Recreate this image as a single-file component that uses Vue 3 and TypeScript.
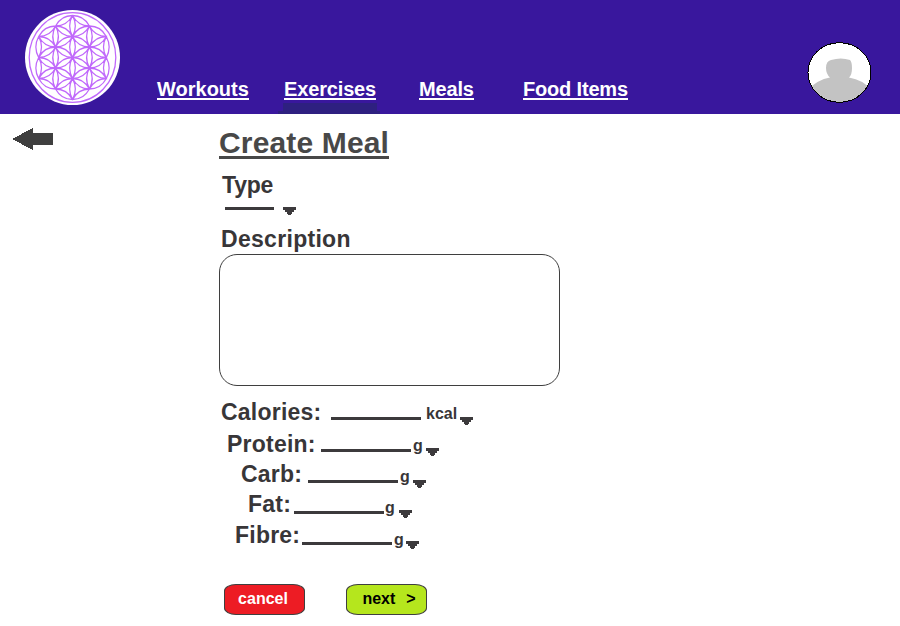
<script setup lang="ts">
interface NavItem {
  label: string
  slug: string
  active?: boolean
}
interface Nutrient {
  label: string
  slug: string
  unit: string
}

const navItems: NavItem[] = [
  { label: 'Workouts', slug: 'workouts' },
  { label: 'Exercises', slug: 'exercises', active: true },
  { label: 'Meals', slug: 'meals' },
  { label: 'Food Items', slug: 'foods' },
]

const nutrients: Nutrient[] = [
  { label: 'Calories:', slug: 'calories', unit: 'kcal' },
  { label: 'Protein:', slug: 'protein', unit: 'g' },
  { label: 'Carb:', slug: 'carb', unit: 'g' },
  { label: 'Fat:', slug: 'fat', unit: 'g' },
  { label: 'Fibre:', slug: 'fibre', unit: 'g' },
]

// Flower emblem: a lens-shaped petal joins each pair of neighbours on a 19-point hex lattice.
const R = 21
const points: [number, number][] = []
for (let q = -2; q <= 2; q++) {
  for (let s = -2; s <= 2; s++) {
    if (Math.abs(q + s) <= 2) points.push([q * R * Math.sqrt(0.75), (s + q / 2) * R])
  }
}
const petals: string[] = []
points.forEach(([x1, y1], i) => {
  points.slice(i + 1).forEach(([x2, y2]) => {
    if (Math.abs(Math.hypot(x2 - x1, y2 - y1) - R) < 0.1) {
      const a = `${x1.toFixed(2)} ${y1.toFixed(2)}`
      const b = `${x2.toFixed(2)} ${y2.toFixed(2)}`
      petals.push(`M${a}A${R} ${R} 0 0 1 ${b}A${R} ${R} 0 0 1 ${a}`)
    }
  })
})
const flower = petals.join('')
const caret = 'M0 0H13V3H11V5H9V7H8V8H5V7H4V5H2V3H0Z'
</script>

<template>
  <div class="page">
    <header class="topbar">
      <svg class="logo" viewBox="-48.5 -48.5 96 96">
        <circle r="47.5" fill="#fff" />
        <g fill="none" stroke="#c069fb">
          <ellipse rx="43.3" ry="44.8" stroke-width="1.3" />
          <path :d="flower" transform="scale(.93 1)" stroke-width="1.35" />
        </g>
      </svg>
      <nav class="nav">
        <div v-for="item in navItems" :key="item.slug" class="nav-item" :class="item.slug">
          <a class="nav-link">{{ item.label }}</a>
          <svg v-if="item.active" class="marker" viewBox="0 0 102 11" shape-rendering="crispEdges">
            <path d="M5 0H99V8H102V11H0V8H5Z" fill="#2e2080" />
          </svg>
        </div>
      </nav>
      <svg class="avatar" viewBox="0 0 66 62">
        <defs>
          <clipPath id="face"><ellipse cx="33.5" cy="31.5" rx="31.5" ry="29.8" /></clipPath>
        </defs>
        <ellipse cx="33.5" cy="31.5" rx="31.5" ry="29.8" fill="#fff" />
        <g clip-path="url(#face)" fill="#c3c3c3">
          <path d="M0 51Q10 39 24 36.5Q20 33 20 27Q20 20 25 19Q35 16 44 19Q46 21 46 27Q46 34 43 36.5Q58 39 66 50V62H0Z" />
        </g>
        <ellipse cx="33.5" cy="31.5" rx="31.5" ry="29.8" fill="none" stroke="#000" shape-rendering="crispEdges" />
      </svg>
    </header>

    <main class="body">
      <div class="side">
        <svg class="back" viewBox="0 0 41 22" shape-rendering="crispEdges">
          <path d="M0 11L21 0V5H41V17H21V22Z" fill="#3f3f3f" />
        </svg>
      </div>
      <div class="form">
        <h1 class="title">Create Meal</h1>
        <div class="label type-label">Type</div>
        <div class="type-row">
          <span class="blank short"></span>
          <svg class="caret" viewBox="0 0 13 8" shape-rendering="crispEdges"><path :d="caret" fill="#3c3a3c" /></svg>
        </div>
        <div class="label desc-label">Description</div>
        <div class="description"></div>
        <div class="nutrients">
          <div v-for="n in nutrients" :key="n.slug" class="row" :class="n.slug">
            <span class="label row-label">{{ n.label }}</span>
            <span class="blank"></span>
            <span class="unit">{{ n.unit }}</span>
            <svg class="caret" viewBox="0 0 13 8" shape-rendering="crispEdges"><path :d="caret" fill="#3c3a3c" /></svg>
          </div>
        </div>
        <div class="actions">
          <button class="btn cancel">cancel</button>
          <button class="btn next">next<span class="chevron">&gt;</span></button>
        </div>
      </div>
    </main>
  </div>
</template>

<style>
body {
  margin: 0;
  background: #fff;
}
</style>

<style scoped>
.page {
  width: 900px;
  height: 626px;
  overflow: hidden;
  font-family: 'Liberation Sans', Arial, sans-serif;
  font-weight: 700;
  color: #383638;
}
.topbar {
  display: flex;
  box-sizing: border-box;
  height: 114px;
  padding-left: 24px;
  background: #39179d;
}
.logo {
  width: 96px;
  height: 96px;
  margin-top: 9px;
}
.nav {
  display: flex;
  margin-left: 37px;
  width: 649px;
}
.nav-item {
  display: flex;
  flex-direction: column;
  align-items: flex-start;
  box-sizing: border-box;
  padding-top: 78px;
}
.nav-item.workouts { width: 127px; }
.nav-item.exercises { width: 135px; }
.nav-item.meals { width: 104px; }
.nav-link {
  height: 20px;
  line-height: 22px;
  font-size: 20px;
  letter-spacing: -0.15px;
  color: #fff;
  white-space: nowrap;
  border-bottom: 2px solid #fff;
}
.workouts .nav-link { letter-spacing: 0; }
.foods .nav-link { letter-spacing: -0.18px; }
.marker {
  display: block;
  width: 102px;
  height: 11px;
  margin: 3px 0 0 -6px;
}
.avatar {
  width: 66px;
  height: 62px;
  margin-top: 41px;
}
.body {
  display: flex;
}
.side {
  width: 219px;
}
.back {
  display: block;
  width: 41px;
  height: 22px;
  margin: 14px 0 0 12px;
}
.form {
  width: 341px;
}
.title {
  width: 170px;
  height: 30px;
  margin: 12px 0 0;
  line-height: 34px;
  font-size: 30px;
  letter-spacing: 0.15px;
  white-space: nowrap;
  color: #484848;
  border-bottom: 3px solid #484848;
}
.label {
  height: 26px;
  line-height: 26px;
  font-size: 23px;
  letter-spacing: 0.22px;
  white-space: nowrap;
}
.type-label {
  margin: 13px 0 0 3px;
  letter-spacing: -0.2px;
}
.type-row {
  display: flex;
  gap: 9px;
  height: 8px;
  margin: 9px 0 0 6px;
}
.blank {
  width: 90px;
  height: 3px;
  flex: none;
  background: #3c3a3c;
}
.blank.short {
  width: 49px;
}
.caret {
  display: block;
  flex: none;
  width: 13px;
  height: 8px;
}
.desc-label {
  margin: 11px 0 0 2px;
  letter-spacing: 0.3px;
}
.description {
  box-sizing: border-box;
  height: 132px;
  margin-top: 2px;
  border: 1px solid #3f3f3f;
  border-radius: 18px;
}
.nutrients {
  padding-top: 13px;
  height: 172px;
}
.row {
  display: flex;
  align-items: flex-start;
  height: 30px;
}
.row-label {
  flex: none;
}
.row .unit {
  flex: none;
  line-height: 18px;
  font-size: 16px;
}
.calories { padding-left: 2px; height: 32px; }
.calories .row-label { width: 110px; }
.calories .blank { margin-top: 18px; }
.calories .unit { width: 34px; margin: 6px 0 0 5px; }
.calories .caret { margin-top: 18px; }
.protein { padding-left: 8px; }
.protein .row-label { width: 94px; }
.protein .blank { margin-top: 18px; }
.protein .unit { width: 13px; margin: 6px 0 0 2px; }
.protein .caret { margin-top: 17px; }
.carb { padding-left: 22px; }
.carb .row-label { width: 67px; }
.carb .blank { margin-top: 19px; }
.carb .unit { width: 13px; margin: 7px 0 0 2px; }
.carb .caret { margin-top: 19px; }
.fat { padding-left: 29px; height: 31px; }
.fat .row-label { width: 46px; }
.fat .blank { margin-top: 20px; }
.fat .unit { width: 14px; margin: 8px 0 0 1px; }
.fat .caret { margin-top: 19px; }
.fibre { padding-left: 16px; }
.fibre .row-label { width: 67px; }
.fibre .blank { margin-top: 20px; }
.fibre .unit { width: 12px; margin: 9px 0 0 2px; }
.fibre .caret { margin-top: 19px; }
.actions {
  display: flex;
  gap: 41px;
  margin-top: 13px;
  padding-left: 5px;
}
.btn {
  box-sizing: border-box;
  flex: none;
  width: 81px;
  height: 31px;
  padding: 0 0 2px;
  border: 1px solid #3f3f3f;
  border-radius: 12px / 7px;
  font: 700 16px/18px 'Liberation Sans', Arial, sans-serif;
  white-space: nowrap;
}
.cancel {
  padding-right: 3px;
  background: #ed1c24;
  color: #fff;
}
.next {
  padding-left: 5px;
  background: #b5e61d;
  color: #000;
}
.chevron {
  margin-left: 11px;
}
</style>
